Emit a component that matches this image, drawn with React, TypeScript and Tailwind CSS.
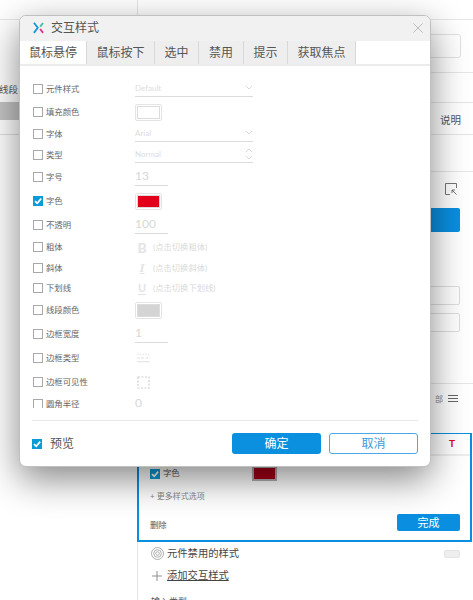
import React from "react";

const font = { fontFamily: '"Lato", "Noto Sans CJK SC", sans-serif' };

const tabs = [
  { label: "鼠标悬停", w: "w-[67px]", active: true },
  { label: "鼠标按下", w: "w-[68px]" },
  { label: "选中", w: "w-[44px]" },
  { label: "禁用", w: "w-[45px]" },
  { label: "提示", w: "w-[44px]" },
  { label: "获取焦点", w: "w-[68px]" },
];

const Check = ({ on }: { on?: boolean }) =>
  on ? (
    <span className="w-[10px] h-[10px] bg-[#0d9bd6] flex items-center justify-center shrink-0">
      <svg viewBox="0 0 10 10" className="w-full h-full">
        <path d="M2 5.2 L4.2 7.2 L8.2 2.6" fill="none" stroke="#fff" strokeWidth="1.7" />
      </svg>
    </span>
  ) : (
    <span className="w-[10px] h-[10px] border border-[#a8a8a8] bg-white shrink-0" />
  );

const Swatch = ({ color }: { color: string }) => (
  <div className="w-[27px] h-[17px] border border-[#e4e4e4] rounded-[2px] p-[1px]">
    <div className="w-full h-full border border-[#dcdcdc]" style={{ background: color }} />
  </div>
);

const Select = ({ text, spin }: { text: string; spin?: boolean }) => (
  <div className="w-[118px] h-[17px] border-b border-[#dcdcdc] flex items-center justify-between text-[8px] text-[#dcdcdc] mt-[-2px]">
    <span>{text}</span>
    {spin ? (
      <svg viewBox="0 0 8 14" className="w-[8px] h-[14px]" fill="none" stroke="#cfcfcf" strokeWidth="0.8">
        <path d="M1 5 L4 2 L7 5 M1 9 L4 12 L7 9" />
      </svg>
    ) : (
      <svg viewBox="0 0 8 6" className="w-[8px] h-[6px]" fill="none" stroke="#cfcfcf" strokeWidth="0.8">
        <path d="M1 1 L4 4 L7 1" />
      </svg>
    )}
  </div>
);

const NumberBox = ({ value }: { value: string }) => (
  <div className="w-[33px] h-[18px] border-b border-[#dcdcdc] text-[12px] leading-[16px] text-[#d8d8d8]">{value}</div>
);

const Toggle = ({ glyph, hint, extra }: { glyph: string; hint: string; extra: string }) => (
  <div className="flex items-center">
    <span className={`w-[14px] text-center font-bold text-[#e4e4e4] ${extra}`}>{glyph}</span>
    <span className="ml-[4px] text-[8.3px] text-[#dadada]">{hint}</span>
  </div>
);

const rows: { label: string; mt: string; on?: boolean; control: React.ReactNode }[] = [
  { label: "元件样式", mt: "mt-0", control: <Select text="Default" /> },
  { label: "填充颜色", mt: "mt-[3px]", control: <Swatch color="#ffffff" /> },
  { label: "字体", mt: "mt-[2px]", control: <Select text="Arial" /> },
  { label: "类型", mt: "mt-[1px]", control: <Select text="Normal" spin /> },
  { label: "字号", mt: "mt-[2px]", control: <NumberBox value="13" /> },
  { label: "字色", mt: "mt-[4px]", on: true, control: <Swatch color="#e2001a" /> },
  { label: "不透明", mt: "mt-[4px]", control: <NumberBox value="100" /> },
  { label: "粗体", mt: "mt-[2px]", control: <Toggle glyph="B" hint="(点击切换粗体)" extra="text-[14px]" /> },
  { label: "斜体", mt: "mt-[1px]", control: <Toggle glyph="I" hint="(点击切换斜体)" extra="text-[13px] italic underline font-['Liberation_Serif']" /> },
  { label: "下划线", mt: "mt-0", control: <Toggle glyph="U" hint="(点击切换下划线)" extra="text-[11px] underline underline-offset-2" /> },
  { label: "线段颜色", mt: "mt-[2px]", control: <Swatch color="#d4d4d4" /> },
  { label: "边框宽度", mt: "mt-[4px]", control: <NumberBox value="1" /> },
  {
    label: "边框类型",
    mt: "mt-[4px]",
    control: (
      <svg viewBox="0 0 14 12" className="w-[13px] h-[12px] ml-[2px]" stroke="#dedede" strokeWidth="1" fill="none">
        <path d="M0 2 H14" strokeDasharray="1.5 1.5" />
        <path d="M0 6 H14" strokeDasharray="3 1.5" />
        <path d="M0 10 H14" />
      </svg>
    ),
  },
  {
    label: "边框可见性",
    mt: "mt-[4px]",
    control: (
      <svg viewBox="0 0 13 13" className="w-[13px] h-[13px] ml-[2px]" stroke="#d0d0d0" strokeWidth="1.2" fill="none">
        <rect x="1" y="1" width="11" height="11" strokeDasharray="2 1.5" />
      </svg>
    ),
  },
  { label: "圆角半径", mt: "mt-[2px]", control: <NumberBox value="0" /> },
];

const Dialog = () => (
  <div className="absolute left-[19px] top-[15px] w-[412px] h-[452px] bg-white rounded-[7px] border border-[#c0c0c0] shadow-[0_12px_36px_rgba(0,0,0,0.48)] flex flex-col overflow-hidden">
    <div className="h-[25px] bg-[#f1f1f1] flex items-center pl-[13px] pr-[7px] pb-[1px] shrink-0">
      <svg viewBox="0 0 12 13" className="w-[11px] h-[12px]" fill="none" strokeWidth="2">
        <path d="M1 0.8 L5.2 6.3 L1 11.8" stroke="#1199dd" />
        <path d="M11 1 L7.8 5" stroke="#3cc39a" />
        <path d="M7.8 7.6 L11 11.8" stroke="#e8308a" />
      </svg>
      <span className="ml-[7px] text-[12px] text-[#555]">交互样式</span>
      <svg viewBox="0 0 11 11" className="w-[10px] h-[10px] ml-auto" stroke="#a8a8a8" strokeWidth="0.8">
        <path d="M0.5 0.5 L10.5 10.5 M10.5 0.5 L0.5 10.5" />
      </svg>
    </div>
    <div className="flex h-[25px] border-b-2 border-[#ececec] shrink-0">
      {tabs.map((t) => (
        <div
          key={t.label}
          className={`${t.w} flex items-center justify-center pt-[1px] text-[12px] text-[#555] border-r border-[#d8d8d8] ${t.active ? "bg-white" : "bg-[#eeeeee]"}`}
        >
          {t.label}
        </div>
      ))}
    </div>
    <div className="h-[342px] overflow-hidden pt-[13px] pl-[13px] shrink-0">
      {rows.map((r) => (
        <div key={r.label} className={`${r.mt} h-[20px] flex items-center`}>
          <Check on={r.on} />
          <span className="w-[89px] ml-[3px] text-[8.4px] text-[#666]">{r.label}</span>
          {r.control}
        </div>
      ))}
    </div>
    <div className="mx-[12px] mt-[12px] border-t border-[#e8e8e8]" />
    <div className="mt-[12px] px-[12px] flex items-center h-[21px]">
      <Check on />
      <span className="ml-[8px] text-[12px] text-[#555]">预览</span>
      <button className="ml-auto w-[89px] h-[21px] bg-[#0b90e0] rounded-[3px] text-white text-[12px]">确定</button>
      <button className="ml-[8px] w-[89px] h-[21px] border border-[#4aa8e6] rounded-[3px] text-[#3b9ad9] text-[12px]">取消</button>
    </div>
  </div>
);

const App = () => (
  <div className="relative w-[473px] h-[600px] overflow-hidden bg-white flex" style={font}>
    {/* left column behind the dialog */}
    <div className="w-[137px] shrink-0 flex flex-col pt-[19px]">
      <div className="h-[60px] border-t border-[#e6e6e6]" />
      <div className="h-[23px] text-[9.5px] text-[#555] flex items-center -ml-[1px]">线段</div>
      <div className="w-[20px] h-[18px] bg-[#c4c4c4]" />
      <div className="mt-[14px] border-t border-[#e0e0e0]" />
    </div>
    {/* right property panel */}
    <div className="flex-1 min-w-0 border-l border-[#e4e4e4] flex flex-col pt-[19px] *:shrink-0">
      <div className="border-t border-[#e6e6e6] h-[53px] pt-[14px] pr-[12px] flex justify-end">
        <div className="w-[60px] h-[24px] border border-[#e2e2e2] rounded-[3px]" />
      </div>
      <div className="border-t border-[#e6e6e6] h-[30px]" />
      <div className="border-y border-[#e6e6e6] h-[33px] pt-[5px] flex items-center justify-end pr-[12px] text-[10.5px] text-[#555]">说明</div>
      <div className="h-[36px]" />
      <div className="border-t border-[#e6e6e6] pt-[11px] pr-[16px] flex justify-end">
        <svg viewBox="0 0 12 12" className="w-[12px] h-[12px]" fill="none" stroke="#666" strokeWidth="0.9">
          <path d="M5 11.5 H0.5 V0.5 H11.5 V5" />
          <path d="M11.5 11.5 L7 7 M7 10 V7 H10" />
        </svg>
      </div>
      <div className="mt-[13px] mr-[13px] h-[24px] bg-[#0a8fe0] rounded-[2px]" />
      <div className="mt-[54px] mr-[13px] h-[19px] border border-[#dedede] rounded-[2px]" />
      <div className="mt-[8px] mr-[13px] h-[19px] border border-[#dedede] rounded-[2px]" />
      <div className="mt-[51px] border-t border-[#e6e6e6] h-[30px] flex items-center justify-end gap-[5px] pr-[15px] text-[8px] text-[#888]">
        <span>部</span>
        <span className="w-[10px] h-[7px] border-y border-[#666] flex items-center">
          <span className="w-full border-t border-[#666]" />
        </span>
      </div>
      <div className="mt-[20px] -ml-[1px] mr-[1px] h-[109px] border-2 border-t border-[#0a8fe0] flex flex-col">
        <div className="h-[22px] border-b-2 border-[#eeeeee] flex items-center justify-end pr-[15px] pb-[2px] text-[10px] font-bold text-[#e2001a]">T</div>
        <div className="mt-[10px] ml-[11px] flex items-center">
          <Check on />
          <span className="ml-[3px] text-[8.4px] text-[#555]">字色</span>
          <div className="ml-[72px] w-[25px] h-[15px] bg-[#a80017] border-2 border-[#b0b0b0]" />
        </div>
        <div className="mt-[9px] ml-[11px] text-[8px] text-[#888]">+ 更多样式选项</div>
        <div className="mt-[12px] ml-[11px] mr-[10px] flex items-center justify-between">
          <span className="text-[8.4px] text-[#555] mt-[5px]">删除</span>
          <button className="w-[63px] h-[17px] bg-[#0a8fe0] rounded-[2px] text-white text-[11px] leading-[17px]">完成</button>
        </div>
      </div>
      <div className="h-[23px] flex items-center pl-[13px] pr-[13px]">
        <svg viewBox="0 0 13 13" className="w-[13px] h-[13px]" fill="none" stroke="#999" strokeWidth="0.8">
          <circle cx="6.5" cy="6.5" r="6" />
          <circle cx="6.5" cy="6.5" r="3.8" />
          <circle cx="6.5" cy="6.5" r="1.8" />
        </svg>
        <span className="ml-[3px] text-[10.3px] text-[#444]">元件禁用的样式</span>
        <span className="ml-auto w-[16px] h-[8px] bg-[#eeeeee] border border-[#e4e4e4] rounded-[2px]" />
      </div>
      <div className="h-[21px] flex items-center pl-[14px]">
        <svg viewBox="0 0 10 10" className="w-[10px] h-[10px]" stroke="#777" strokeWidth="0.8">
          <path d="M5 0 V10 M0 5 H10" />
        </svg>
        <span className="ml-[5px] text-[10.3px] text-[#444] underline">添加交互样式</span>
      </div>
      <div className="mt-[9px] ml-[13px] text-[9px] text-[#555]">输入类型</div>
    </div>
    <Dialog />
  </div>
);

export default App;
